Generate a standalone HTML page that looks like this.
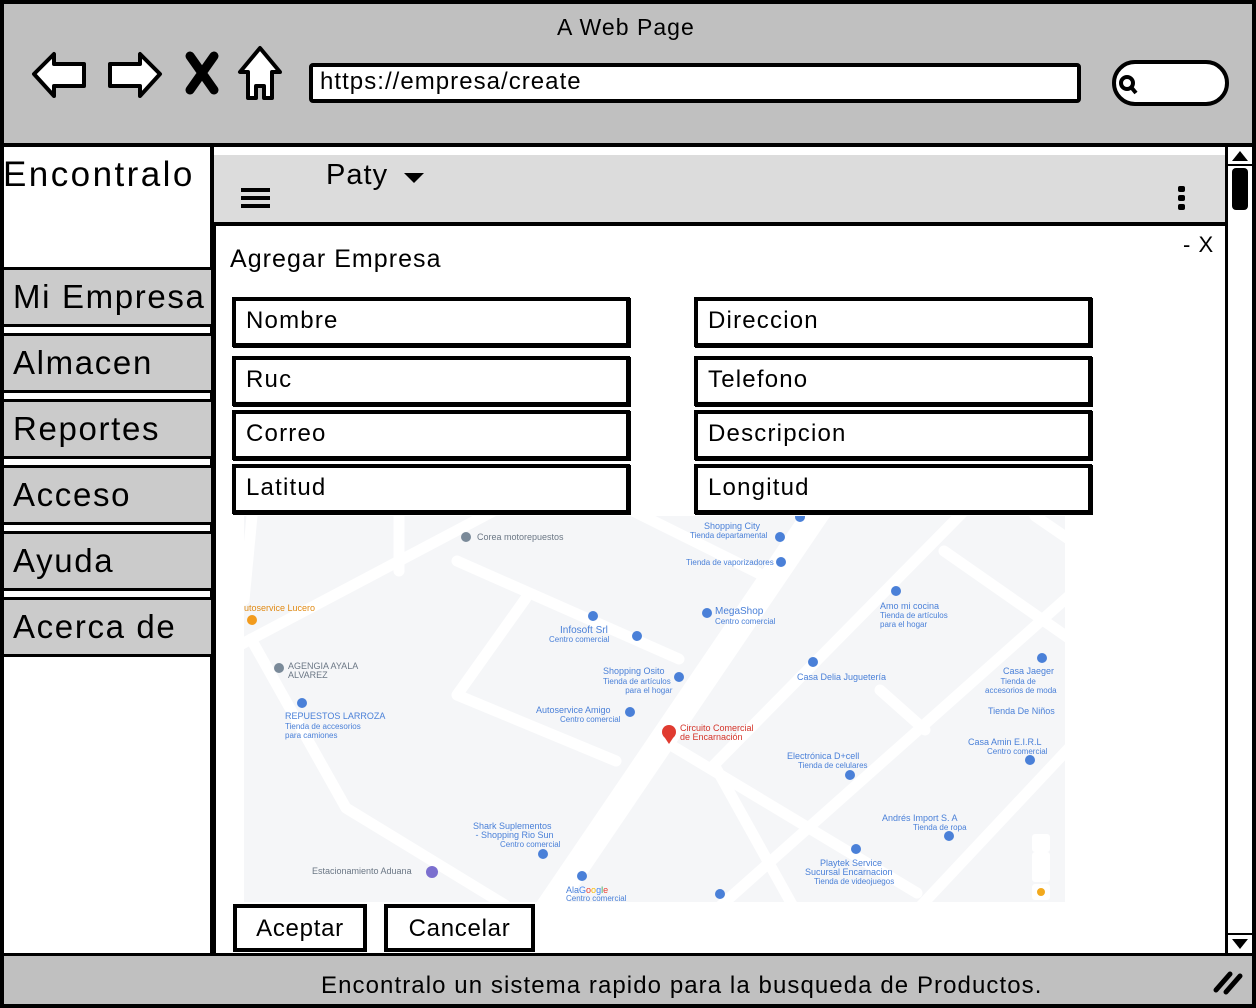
<!DOCTYPE html>
<html><head><meta charset="utf-8"><style>
*{margin:0;padding:0;box-sizing:border-box}
body{width:1256px;height:1008px;position:relative;overflow:hidden;background:#fff;font-family:"Liberation Sans",sans-serif;color:#000;letter-spacing:0.065em}
.a{position:absolute}
.top{left:0;top:0;width:1256px;height:147px;background:#c0c0c0;border:4px solid #000;border-bottom:4px solid #000}
.t{font-size:23px;white-space:nowrap}
.menu{left:4px;width:210px;height:60px;background:#cbcbcb;border:3px solid #000;border-left:none;font-size:33px;padding:8px 0 0 9px;letter-spacing:0.05em}
.fld{width:398px;height:50px;border:4px solid #000;background:#fff;font-size:24px;padding:6px 0 0 10px;box-shadow:1px 1px 0 #000;letter-spacing:0.05em}
.btn{height:48px;background:#fff;border:4px solid #000;font-size:24px;text-align:center;padding-top:7px;letter-spacing:0.03em}
.ml{font-size:8px;color:#4a80d8;white-space:nowrap;line-height:9px;letter-spacing:0}
.mb{font-size:10px;color:#4a80d8;white-space:nowrap;letter-spacing:0}
</style></head><body>
<div class="a top"></div>
<div class="a t" style="left:557px;top:14px">A Web Page</div>
<svg class="a" style="left:28px;top:42px" width="260" height="62" viewBox="0 0 260 62">
<path d="M6 32 L26 12 L26 22 L56 22 L56 44 L26 44 L26 54 Z" fill="#fff" stroke="#000" stroke-width="4" stroke-linejoin="round"/>
<path d="M132 32 L112 12 L112 22 L82 22 L82 44 L112 44 L112 54 Z" fill="#fff" stroke="#000" stroke-width="4" stroke-linejoin="round"/>
<path d="M162 14 L186 48 M186 14 L162 48" stroke="#000" stroke-width="9" stroke-linecap="round"/>
<path d="M232 6 L212 30 L220 30 L220 56 L228 56 L228 44 L236 44 L236 56 L244 56 L244 30 L252 30 Z" fill="#fff" stroke="#000" stroke-width="4" stroke-linejoin="round"/>
</svg>
<div class="a" style="left:309px;top:63px;width:772px;height:40px;background:#fff;border:4px solid #000;border-radius:4px"></div>
<div class="a t" style="left:320px;top:68px;font-size:24px">https://empresa/create</div>
<div class="a" style="left:1112px;top:60px;width:117px;height:46px;background:#fff;border:4px solid #000;border-radius:24px"></div>
<svg class="a" style="left:1116px;top:72px" width="26" height="26"><circle cx="11" cy="11" r="6" fill="none" stroke="#000" stroke-width="4"/><path d="M15 15 L20 21" stroke="#000" stroke-width="4"/></svg>

<div class="a" style="left:0;top:145px;width:4px;height:863px;background:#000"></div>
<div class="a" style="left:1252px;top:145px;width:4px;height:863px;background:#000"></div>
<div class="a" style="left:0;top:1004px;width:1256px;height:4px;background:#000"></div>
<div class="a" style="left:210px;top:147px;width:4px;height:806px;background:#000"></div>
<div class="a" style="left:3px;top:155px;font-size:35px;letter-spacing:0.07em">Encontralo</div>
<div class="a menu" style="top:267px">Mi Empresa</div>
<div class="a menu" style="top:333px">Almacen</div>
<div class="a menu" style="top:399px">Reportes</div>
<div class="a menu" style="top:465px">Acceso</div>
<div class="a menu" style="top:531px">Ayuda</div>
<div class="a menu" style="top:597px">Acerca de</div>

<div class="a" style="left:214px;top:155px;width:1012px;height:68px;background:#dcdcdc"></div>
<div class="a" style="left:241px;top:188px;width:29px;height:4px;background:#000;box-shadow:0 8px 0 #000,0 16px 0 #000"></div>
<div class="a" style="left:326px;top:159px;font-size:29px">Paty</div>
<svg class="a" style="left:403px;top:172px" width="22" height="12"><path d="M1 1 L21 1 L11 11Z" fill="#000"/></svg>
<div class="a" style="left:1178px;top:186px;width:7px;height:6px;background:#000;border-radius:2px;box-shadow:0 9px 0 #000,0 18px 0 #000"></div>

<div class="a" style="left:213px;top:222px;width:1013px;height:4px;background:#000"></div>
<div class="a" style="left:212px;top:222px;width:4px;height:731px;background:#000"></div>
<div class="a" style="left:230px;top:245px;font-size:25px">Agregar Empresa</div>
<div class="a" style="left:1183px;top:232px;font-size:22px">- X</div>
<div class="a fld" style="left:232px;top:297px">Nombre</div>
<div class="a fld" style="left:232px;top:356px">Ruc</div>
<div class="a fld" style="left:232px;top:410px">Correo</div>
<div class="a fld" style="left:232px;top:464px">Latitud</div>
<div class="a fld" style="left:694px;top:297px">Direccion</div>
<div class="a fld" style="left:694px;top:356px">Telefono</div>
<div class="a fld" style="left:694px;top:410px">Descripcion</div>
<div class="a fld" style="left:694px;top:464px">Longitud</div>

<svg class="a" style="left:244px;top:516px" width="821" height="386" viewBox="244 516 821 386">
<rect x="244" y="516" width="821" height="386" fill="#f5f6f8"/>
<g stroke="#fff" stroke-width="11" fill="none" stroke-linecap="round" stroke-linejoin="round">
<path d="M240 645 L505 505"/>
<path d="M457 561 L679 659"/>
<path d="M621 505 L774 581"/>
<path d="M526 598 L457 695 L616 761"/>
<path d="M251 639 L346 808 L505 905"/>
<path d="M399 505 L399 571"/>
<path d="M252 516 L244 600"/>
<path d="M970 505 L711 768"/>
<path d="M1070 595 L716 910"/>
<path d="M944 551 L1070 639"/>
<path d="M674 747 L917 893"/>
<path d="M716 768 L795 910"/>
<path d="M1070 747 L917 910"/>
<path d="M880 690 L925 730"/>
<path d="M1035 516 L1070 540"/>
</g>
<path d="M822 505 L547 910" stroke="#fff" stroke-width="26"/>
<g fill="#4a80d8">
<circle cx="593" cy="616" r="5"/><circle cx="637" cy="636" r="5"/><circle cx="707" cy="613" r="5"/><circle cx="781" cy="562" r="5"/><circle cx="780" cy="537" r="5"/><circle cx="896" cy="591" r="5"/><circle cx="813" cy="662" r="5"/><circle cx="679" cy="677" r="5"/><circle cx="630" cy="712" r="5"/><circle cx="1042" cy="658" r="5"/><circle cx="1030" cy="760" r="5"/><circle cx="850" cy="775" r="5"/><circle cx="949" cy="836" r="5"/><circle cx="856" cy="849" r="5"/><circle cx="543" cy="854" r="5"/><circle cx="582" cy="876" r="5"/><circle cx="720" cy="894" r="5"/><circle cx="302" cy="703" r="5"/><circle cx="800" cy="517" r="5"/>
</g>
<circle cx="466" cy="537" r="5" fill="#7a8a99"/><circle cx="279" cy="668" r="5" fill="#7a8a99"/>
<circle cx="252" cy="620" r="5" fill="#f29b1d"/><circle cx="432" cy="872" r="6" fill="#7b6fcf"/>
<circle cx="669" cy="732" r="7" fill="#e03b30"/><path d="M663 735 L669 744 L675 735Z" fill="#e03b30"/>
<rect x="1032" y="834" width="18" height="18" rx="3" fill="#fff"/><rect x="1032" y="852" width="18" height="30" rx="3" fill="#fff"/><rect x="1032" y="884" width="18" height="16" rx="3" fill="#fff"/><circle cx="1041" cy="892" r="4" fill="#f2a91d"/>
</svg>
<div class="a ml" style="left:477px;top:533px;color:#6b7785;font-size:9px">Corea motorepuestos</div>
<div class="a ml" style="left:704px;top:522px;font-size:9px">Shopping City</div>
<div class="a ml" style="left:690px;top:531px">Tienda departamental</div>
<div class="a ml" style="left:686px;top:558px">Tienda de vaporizadores</div>
<div class="a ml" style="left:244px;top:604px;color:#e08a14;font-size:9px">utoservice Lucero</div>
<div class="a mb" style="left:715px;top:606px">MegaShop</div>
<div class="a ml" style="left:715px;top:617px">Centro comercial</div>
<div class="a mb" style="left:560px;top:625px">Infosoft Srl</div>
<div class="a ml" style="left:549px;top:635px">Centro comercial</div>
<div class="a ml" style="left:880px;top:602px;font-size:9px">Amo mi cocina</div>
<div class="a ml" style="left:880px;top:611px">Tienda de artículos<br>para el hogar</div>
<div class="a ml" style="left:288px;top:662px;color:#6b7785;font-size:9px">AGENGIA AYALA<br>ALVAREZ</div>
<div class="a ml" style="left:603px;top:667px;font-size:9px">Shopping Osito</div>
<div class="a ml" style="left:603px;top:677px">Tienda de artículos<br>&nbsp;&nbsp;&nbsp;&nbsp;&nbsp;&nbsp;&nbsp;&nbsp;&nbsp;&nbsp;para el hogar</div>
<div class="a ml" style="left:797px;top:673px;font-size:9px">Casa Delia Juguetería</div>
<div class="a ml" style="left:1003px;top:667px;font-size:9px">Casa Jaeger</div>
<div class="a ml" style="left:985px;top:677px">&nbsp;&nbsp;&nbsp;&nbsp;&nbsp;&nbsp;&nbsp;Tienda de<br>accesorios de moda</div>
<div class="a ml" style="left:285px;top:712px;font-size:9px">REPUESTOS LARROZA</div>
<div class="a ml" style="left:285px;top:722px">Tienda de accesorios<br>para camiones</div>
<div class="a ml" style="left:536px;top:706px;font-size:9px">Autoservice Amigo</div>
<div class="a ml" style="left:560px;top:715px">Centro comercial</div>
<div class="a ml" style="left:988px;top:707px;font-size:9px">Tienda De Niños</div>
<div class="a ml" style="left:680px;top:724px;color:#d4342a;font-size:9px">Circuito Comercial<br>de Encarnación</div>
<div class="a ml" style="left:968px;top:738px;font-size:9px">Casa Amin E.I.R.L</div>
<div class="a ml" style="left:987px;top:747px">Centro comercial</div>
<div class="a ml" style="left:787px;top:752px;font-size:9px">Electrónica D+cell</div>
<div class="a ml" style="left:798px;top:761px">Tienda de celulares</div>
<div class="a ml" style="left:882px;top:814px;font-size:9px">Andrés Import S. A</div>
<div class="a ml" style="left:913px;top:823px">Tienda de ropa</div>
<div class="a ml" style="left:473px;top:822px;font-size:9px">Shark Suplementos<br>&nbsp;- Shopping Rio Sun</div>
<div class="a ml" style="left:500px;top:840px">Centro comercial</div>
<div class="a ml" style="left:805px;top:859px;font-size:9px">&nbsp;&nbsp;&nbsp;&nbsp;&nbsp;&nbsp;Playtek Service<br>Sucursal Encarnacion</div>
<div class="a ml" style="left:814px;top:877px">Tienda de videojuegos</div>
<div class="a ml" style="left:312px;top:867px;color:#6b7785;font-size:9px">Estacionamiento Aduana</div>
<div class="a ml" style="left:566px;top:886px;font-size:9px">Ala<span style="color:#4285f4">G</span><span style="color:#ea4335">o</span><span style="color:#fbbc05">o</span><span style="color:#4285f4">g</span><span style="color:#34a853">l</span><span style="color:#ea4335">e</span></div>
<div class="a ml" style="left:566px;top:894px">Centro comercial</div>

<div class="a btn" style="left:233px;top:904px;width:134px">Aceptar</div>
<div class="a btn" style="left:384px;top:904px;width:151px">Cancelar</div>

<div class="a" style="left:1225px;top:147px;width:3px;height:806px;background:#000"></div>
<svg class="a" style="left:1228px;top:147px" width="24" height="806">
<path d="M4 14 L12 4 L20 14Z" fill="#000"/>
<rect x="4" y="21" width="16" height="42" rx="4" fill="#000"/>
<path d="M4 792 L12 802 L20 792Z" fill="#000"/>
<rect x="0" y="17" width="24" height="2" fill="#000"/><rect x="0" y="786" width="24" height="2" fill="#000"/>
</svg>

<div class="a" style="left:4px;top:953px;width:1248px;height:51px;background:#c0c0c0;border-top:3px solid #000"></div>
<div class="a" style="left:321px;top:972px;font-size:24px;white-space:nowrap;letter-spacing:0.045em">Encontralo un sistema rapido para la busqueda de Productos.</div>
<svg class="a" style="left:1212px;top:968px" width="32" height="28"><path d="M4 22 L18 6 M14 24 L28 8" stroke="#000" stroke-width="5" stroke-linecap="round"/></svg>
</body></html>
